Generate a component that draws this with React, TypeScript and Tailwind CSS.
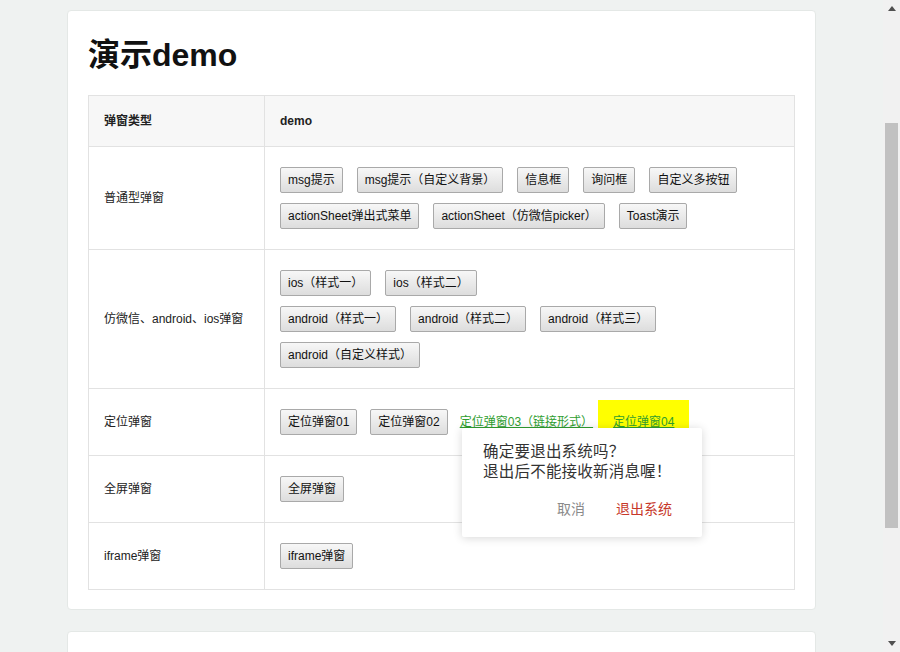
const font = "[font-family:'Liberation_Sans','Noto_Sans_CJK_SC',sans-serif]";

function Btn({ children }: { children: string }) {
  return (
    <button className="inline-flex h-[26px] items-center rounded-[2px] border border-[#a9a9a9] bg-gradient-to-b from-[#f7f7f7] to-[#dddddd] px-[7px] text-[12px] text-[#111]">
      {children}
    </button>
  );
}

function Confirm() {
  return (
    <div className="absolute left-[-136px] top-[28px] z-10 w-[240px] rounded-[2px] bg-white pb-[19px] pl-[21px] pr-[30px] pt-[12px] shadow-[0_1px_10px_rgba(0,0,0,0.16)] [font-family:'Noto_Sans_CJK_SC',sans-serif]">
      <p className="whitespace-nowrap text-[15.5px] leading-[20px] tracking-[0.2px] text-[#333]">
        确定要退出系统吗？
        <br />
        退出后不能接收新消息喔！
      </p>
      <div className="mt-[18px] flex justify-end gap-[31px] text-[14px] leading-[20px]">
        <span className="text-[#8a8a8a]">取消</span>
        <span className="text-[#c7382a]">退出系统</span>
      </div>
    </div>
  );
}

const rows: { name: string; lines: string[][] }[] = [
  {
    name: "普通型弹窗",
    lines: [
      ["msg提示", "msg提示（自定义背景）", "信息框", "询问框", "自定义多按钮"],
      ["actionSheet弹出式菜单", "actionSheet（仿微信picker）", "Toast演示"],
    ],
  },
  {
    name: "仿微信、android、ios弹窗",
    lines: [
      ["ios（样式一）", "ios（样式二）"],
      ["android（样式一）", "android（样式二）", "android（样式三）"],
      ["android（自定义样式）"],
    ],
  },
];

export default function App() {
  return (
    <div className={`flex h-[652px] overflow-hidden bg-[#eff2f1] ${font}`}>
      <main className="flex-1 pt-[10px]">
        <div className="mx-auto w-[749px] rounded-[4px] border border-[#e4e8e6] bg-white px-[20px] pb-[19px] pt-[20px]">
          <h1 className="mb-[16px] text-[32px] font-bold leading-[48px] text-[#111]">演示demo</h1>
          <table className="w-full table-fixed border-collapse text-[12px] text-[#222]">
            <colgroup>
              <col className="w-[176px]" />
              <col />
            </colgroup>
            <thead>
              <tr className="h-[51px] bg-[#f7f7f7]">
                <th className="border border-[#e2e2e2] px-[15px] text-left font-bold">弹窗类型</th>
                <th className="border border-[#e2e2e2] px-[15px] text-left font-bold">demo</th>
              </tr>
            </thead>
            <tbody>
              {rows.map((r) => (
                <tr key={r.name}>
                  <td className="border border-[#e2e2e2] px-[15px]">{r.name}</td>
                  <td className="border border-[#e2e2e2] px-[15px] py-[20px]">
                    <div className="flex flex-col gap-y-[10px]">
                      {r.lines.map((line, i) => (
                        <div key={i} className="flex gap-x-[14px]">
                          {line.map((it) => (
                            <Btn key={it}>{it}</Btn>
                          ))}
                        </div>
                      ))}
                    </div>
                  </td>
                </tr>
              ))}
              <tr>
                <td className="border border-[#e2e2e2] px-[15px]">定位弹窗</td>
                <td className="border border-[#e2e2e2] px-[15px] py-[20px]">
                  <div className="flex items-center">
                    <Btn>定位弹窗01</Btn>
                    <span className="ml-[13px] flex">
                      <Btn>定位弹窗02</Btn>
                    </span>
                    <a className="ml-[12px] text-[#2f9e2f] underline">定位弹窗03（链接形式）</a>
                    <div className="relative -my-[9px] ml-[5px] flex h-[44px] items-center bg-[#ffff00] px-[15px]">
                      <a className="text-[#2f9e2f] underline">定位弹窗04</a>
                      <Confirm />
                    </div>
                  </div>
                </td>
              </tr>
              <tr>
                <td className="border border-[#e2e2e2] px-[15px]">全屏弹窗</td>
                <td className="border border-[#e2e2e2] px-[15px] py-[20px]">
                  <div className="flex">
                    <Btn>全屏弹窗</Btn>
                  </div>
                </td>
              </tr>
              <tr>
                <td className="border border-[#e2e2e2] px-[15px]">iframe弹窗</td>
                <td className="border border-[#e2e2e2] px-[15px] py-[20px]">
                  <div className="flex">
                    <Btn>iframe弹窗</Btn>
                  </div>
                </td>
              </tr>
            </tbody>
          </table>
        </div>
        <div className="mx-auto mt-[21px] h-[200px] w-[749px] rounded-[4px] border border-[#e4e8e6] bg-white" />
      </main>
      <div className="flex w-[17px] flex-col bg-[#f1f1f1]">
        <div className="flex h-[17px] items-center justify-center">
          <svg width="8" height="5" viewBox="0 0 8 5">
            <path d="M0 5 L4 0 L8 5 Z" fill="#505050" />
          </svg>
        </div>
        <div className="mx-[2px] mt-[106px] h-[405px] bg-[#c1c1c1]" />
        <div className="flex-1" />
        <div className="flex h-[17px] items-center justify-center">
          <svg width="8" height="5" viewBox="0 0 8 5">
            <path d="M0 0 L8 0 L4 5 Z" fill="#505050" />
          </svg>
        </div>
      </div>
    </div>
  );
}
